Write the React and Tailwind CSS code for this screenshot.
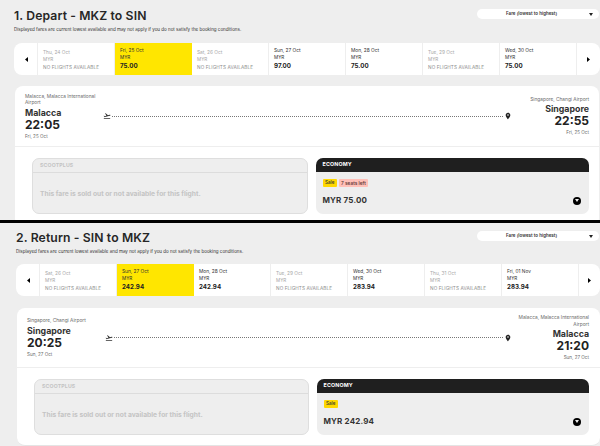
import { MdFlightTakeoff, MdLocationOn } from 'react-icons/md';

function Caret({ dir }) {
  return (
    <svg width="3" height="5" viewBox="0 0 3 5" className="text-black">
      {dir === 'left' ? <path d="M3 0v5L0 2.5z" fill="currentColor" /> : <path d="M0 0v5l3-2.5z" fill="currentColor" />}
    </svg>
  );
}

function DateCell({ day, price, selected }) {
  if (!price) {
    return (
      <div className="w-[77px] h-full shrink-0 border-r border-[#eeeeee] pl-[5px] pt-[6px] flex flex-col bg-white">
        <span className="text-[4.8px] leading-[6px] text-[#a8a8a8]">{day}</span>
        <span className="text-[4.6px] leading-[6px] mt-[2px] text-[#a8a8a8]">MYR</span>
        <span className="text-[4.7px] leading-[6px] mt-[1px] tracking-[0.02em] whitespace-nowrap text-[#8c8c8c]">NO FLIGHTS AVAILABLE</span>
      </div>
    );
  }
  return (
    <div className={`w-[77px] h-full shrink-0 border-r pl-[5px] pt-[4px] flex flex-col text-[#333333] ${selected ? 'bg-[#ffe600] border-[#ffe600]' : 'bg-white border-[#eeeeee]'}`}>
      <span className="text-[4.8px] leading-[6px]">{day}</span>
      <span className="text-[4.6px] leading-[6px] mt-[2px]">MYR</span>
      <span className="text-[6.2px] leading-[8px] mt-[1px] font-bold text-[#222222]">{price}</span>
    </div>
  );
}

function DateStrip({ days }) {
  return (
    <div className="h-[32px] flex items-stretch bg-white rounded-[8px] overflow-hidden">
      <div className="w-[24px] shrink-0 border-r border-[#eeeeee] pl-[2px] flex items-center justify-center">
        <Caret dir="left" />
      </div>
      {days.map((d) => (
        <DateCell key={d.day} {...d} />
      ))}
      <div className="flex-1 flex items-center justify-center">
        <Caret dir="right" />
      </div>
    </div>
  );
}

function Place({ airport, city, time, date, right }) {
  return (
    <div className={`w-[76px] shrink-0 flex flex-col ${right ? 'items-end text-right' : 'items-start'}`}>
      <span className="text-[4.8px] leading-[6.5px] text-[#6b6b6b]">{airport}</span>
      <span className="text-[8.8px] leading-[11px] font-bold text-[#333333] mt-[1px] whitespace-nowrap">{city}</span>
      <span className="text-[12px] leading-[14px] font-bold text-[#222222] whitespace-nowrap">{time}</span>
      <span className="text-[4.6px] leading-[7px] text-[#6b6b6b] mt-[1px]">{date}</span>
    </div>
  );
}

function FareBoxes({ price, seats }) {
  return (
    <div className="flex gap-[8px] h-[56px]">
      <div className="flex-1 rounded-[7px] border border-[#dedede] bg-[#eeeeee] flex flex-col">
        <div className="h-[14px] border-b border-[#dcdcdc] pl-[7px] flex items-center text-[5.2px] font-bold tracking-[0.03em] text-[#c4c4c4]">SCOOTPLUS</div>
        <div className="pl-[7px] pt-[17px] text-[6.7px] leading-[8px] font-bold text-[#c4c4c4]">This fare is sold out or not available for this flight.</div>
      </div>
      <div className="flex-1 rounded-[7px] bg-[#eeeeee] flex flex-col overflow-hidden">
        <div className="h-[14px] bg-[#1f1f1f] pl-[7px] flex items-center text-[5.3px] font-bold tracking-[0.03em] text-white">ECONOMY</div>
        <div className="flex-1 px-[7px] pt-[7px] flex flex-col">
          <div className="flex gap-[2px]">
            <span className="h-[8px] px-[2.5px] rounded-[1px] bg-[#ffd800] text-[4.6px] leading-[8px] font-medium text-[#333333]">Sale</span>
            {seats && <span className="h-[8px] px-[2px] rounded-[1px] bg-[#ffc0b8] text-[4.8px] leading-[8px] font-medium text-[#5a3330]">{seats}</span>}
          </div>
          <div className="flex items-center justify-between mt-[8px] pr-[1px]">
            <span className="text-[8px] leading-[11px] font-bold tracking-[0.02em] text-[#333333]">{price}</span>
            <span className="w-[8px] h-[8px] rounded-full bg-black flex items-center justify-center">
              <svg width="4" height="3" viewBox="0 0 4 3"><path d="M0 0h4L2 3z" fill="#eeeeee" /></svg>
            </span>
          </div>
        </div>
      </div>
    </div>
  );
}

function Section({ title, days, from, to, price, seats, className, stripClass, cardClass, headClass, fareClass }) {
  return (
    <section className={className}>
      <div className="h-[43px] relative">
        <h1 className="pt-[8px] text-[12.2px] leading-[15px] font-semibold tracking-[0.01em] text-[#262626]">{title}</h1>
        <p className="mt-[3px] text-[4.5px] leading-[7px] text-[#333333]">Displayed fares are current lowest available and may not apply if you do not satisfy the booking conditions.</p>
        <div className="absolute right-[1px] top-[9px] w-[122px] h-[10px] rounded-full bg-white flex items-center pl-[29px] pr-[6px] justify-between">
          <span className="text-[4.5px] font-semibold text-[#333333] whitespace-nowrap">Fare (lowest to highest)</span>
          <svg width="4" height="3" viewBox="0 0 4 3"><path d="M0 0h4L2 3z" fill="#222222" /></svg>
        </div>
      </div>
      <div className={stripClass}>
        <DateStrip days={days} />
      </div>
      <div className={cardClass}>
        <div className={headClass}>
          <Place {...from} />
          <div className="flex-1 flex items-center gap-[1px] pl-[2px] pr-[1px]">
            <MdFlightTakeoff className="text-[8px] text-[#333333] shrink-0" />
            <div className="flex-1 border-t border-dotted border-[#777777]" />
            <MdLocationOn className="text-[8px] text-[#222222] shrink-0" />
          </div>
          <Place {...to} right />
        </div>
        <div className={fareClass}>
          <FareBoxes price={price} seats={seats} />
        </div>
      </div>
    </section>
  );
}

const departDays = [
  { day: 'Thu, 24 Oct' },
  { day: 'Fri, 25 Oct', price: '75.00', selected: true },
  { day: 'Sat, 26 Oct' },
  { day: 'Sun, 27 Oct', price: '97.00' },
  { day: 'Mon, 28 Oct', price: '75.00' },
  { day: 'Tue, 29 Oct' },
  { day: 'Wed, 30 Oct', price: '75.00' },
];

const returnDays = [
  { day: 'Sat, 26 Oct' },
  { day: 'Sun, 27 Oct', price: '242.94', selected: true },
  { day: 'Mon, 28 Oct', price: '242.94' },
  { day: 'Tue, 29 Oct' },
  { day: 'Wed, 30 Oct', price: '283.94' },
  { day: 'Thu, 31 Oct' },
  { day: 'Fri, 01 Nov', price: '283.94' },
];

export default function App() {
  return (
    <div className="w-[600px] h-[446px] overflow-hidden bg-[#eeeeee] font-['Inter',sans-serif]">
      <Section
        className="h-[220px] pl-[14px] overflow-hidden"
        stripClass=""
        cardClass="mt-[11px] ml-[1px] mr-[1px] h-[140px] bg-white rounded-[8px]"
        headClass="h-[61px] pl-[10px] pr-[10px] flex items-center border-b border-[#eeeeee]"
        fareClass="pl-[17px] pr-[10px] pt-[11px]"
        title="1. Depart - MKZ to SIN"
        days={departDays}
        from={{ airport: 'Malacca, Malacca International Airport', city: 'Malacca', time: '22:05', date: 'Fri, 25 Oct' }}
        to={{ airport: 'Singapore, Changi Airport', city: 'Singapore', time: '22:55', date: 'Fri, 25 Oct' }}
        price="MYR 75.00"
        seats="7 seats left"
      />
      <div className="h-[3px] bg-black" />
      <Section
        className="h-[224px] -mt-[1px] pl-[16px] overflow-hidden"
        stripClass="-mt-[1px]"
        cardClass="mt-[12px] ml-[1px] h-[138px] bg-white rounded-[8px] border-b border-[#e4e4e4]"
        headClass="h-[60px] pl-[10px] pr-[11px] flex items-center border-b border-[#eeeeee]"
        fareClass="pl-[17px] pr-[11px] pt-[11px]"
        title="2. Return - SIN to MKZ"
        days={returnDays}
        from={{ airport: 'Singapore, Changi Airport', city: 'Singapore', time: '20:25', date: 'Sun, 27 Oct' }}
        to={{ airport: 'Malacca, Malacca International Airport', city: 'Malacca', time: '21:20', date: 'Sun, 27 Oct' }}
        price="MYR 242.94"
      />
    </div>
  );
}
